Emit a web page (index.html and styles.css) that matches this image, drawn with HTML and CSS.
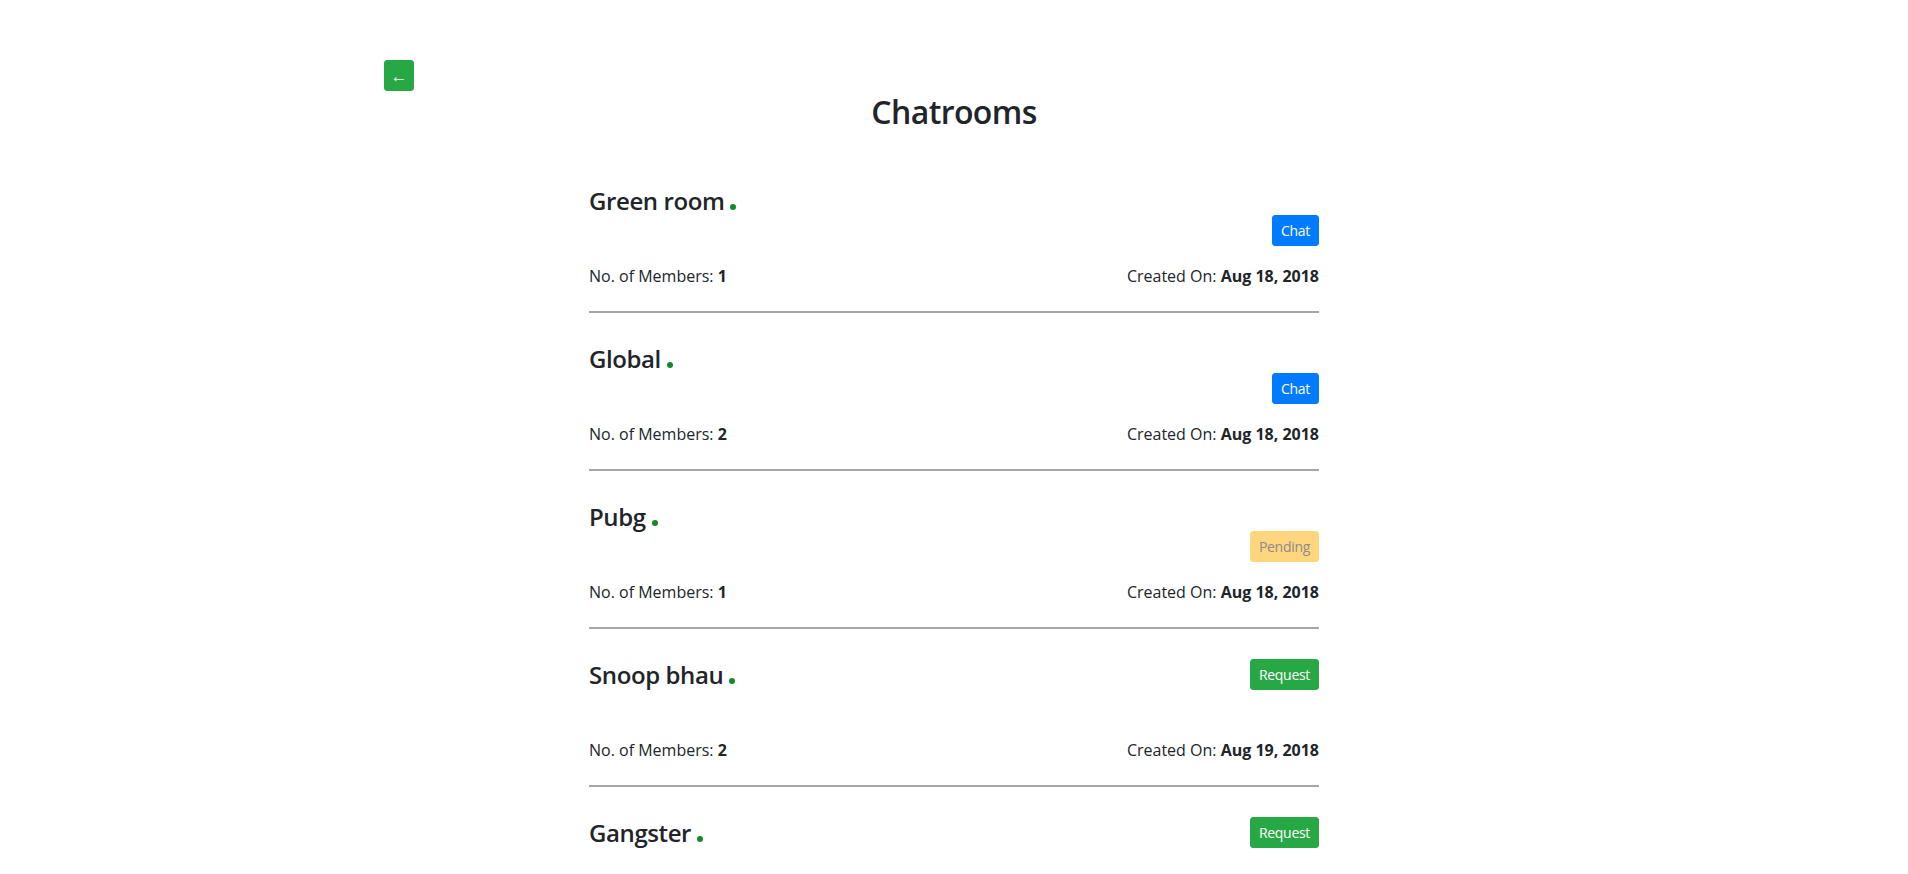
FILE: index.html
```html
<!DOCTYPE html>
<html lang="en">
<head>
<meta charset="utf-8">
<title>Chatrooms</title>
<link rel="stylesheet" href="styles.css">
</head>
<body>
<div class="container">
  <button class="btn btn-back" type="button">&larr;</button>
  <h2 class="title">Chatrooms</h2>
  <div class="rooms">
    <div class="room">
      <div class="room-head"><h4 class="room-name">Green room<span class="dot"></span></h4></div>
      <div class="room-actions"><button class="btn btn-chat" type="button">Chat</button></div>
      <div class="room-meta"><span>No. of Members: <b>1</b></span><span>Created On: <b>Aug 18, 2018</b></span></div>
    </div>
    <div class="room">
      <div class="room-head"><h4 class="room-name">Global<span class="dot"></span></h4></div>
      <div class="room-actions"><button class="btn btn-chat" type="button">Chat</button></div>
      <div class="room-meta"><span>No. of Members: <b>2</b></span><span>Created On: <b>Aug 18, 2018</b></span></div>
    </div>
    <div class="room">
      <div class="room-head"><h4 class="room-name">Pubg<span class="dot"></span></h4></div>
      <div class="room-actions"><button class="btn btn-pending" type="button" disabled>Pending</button></div>
      <div class="room-meta"><span>No. of Members: <b>1</b></span><span>Created On: <b>Aug 18, 2018</b></span></div>
    </div>
    <div class="room">
      <div class="room-head"><h4 class="room-name">Snoop bhau<span class="dot"></span></h4><button class="btn btn-request" type="button">Request</button></div>
      <div class="room-actions"></div>
      <div class="room-meta"><span>No. of Members: <b>2</b></span><span>Created On: <b>Aug 19, 2018</b></span></div>
    </div>
    <div class="room room-last">
      <div class="room-head"><h4 class="room-name">Gangster<span class="dot"></span></h4><button class="btn btn-request" type="button">Request</button></div>
    </div>
  </div>
</div>
</body>
</html>
```
FILE: styles.css
```css
html, body {
  margin: 0;
  height: 100%;
  overflow: hidden;
  background: #fff;
}
body {
  font-family: "Open Sans", "Noto Sans", "Liberation Sans", sans-serif;
  color: #212529;
  font-size: 16px;
  line-height: 1.5;
}
.container {
  width: 1140px;
  margin: 0 auto;
  padding-top: 60px;
}
.btn {
  display: inline-block;
  border: 1px solid transparent;
  border-radius: 3px;
  font-family: inherit;
  font-size: 14px;
  line-height: 21px;
  padding: 4px 8px;
  color: #fff;
  letter-spacing: -0.3px;
  cursor: pointer;
}
.btn-back {
  display: block;
  width: 30px;
  height: 31px;
  padding: 0;
  background: #28a745;
  border-color: #28a745;
  font-size: 17px;
  line-height: 27px;
  letter-spacing: 0;
  text-align: center;
}
.title {
  margin: 0;
  padding-top: 2px;
  text-align: center;
  font-size: 32px;
  font-weight: 600;
  line-height: 38.4px;
  letter-spacing: -0.6px;
}
.rooms {
  width: 730px;
  margin: 24px 0 0 205px;
}
.room {
  padding: 31px 0 23px;
  border-bottom: 2px solid #a6a6a6;
}
.room-last {
  border-bottom: 0;
}
.room-head {
  display: flex;
  justify-content: space-between;
  align-items: flex-start;
  height: 29px;
}
.room-head .btn {
  margin-top: -1px;
}
.room-name {
  margin: 0;
  font-size: 24px;
  font-weight: 600;
  line-height: 30px;
  letter-spacing: -0.4px;
}
.dot {
  display: inline-block;
  width: 6px;
  height: 6px;
  margin-left: 6px;
  border-radius: 50%;
  background: #148a26;
  vertical-align: baseline;
}
.room-actions {
  display: flex;
  justify-content: flex-end;
  height: 31px;
}
.room-meta {
  display: flex;
  justify-content: space-between;
  margin-top: 18px;
  line-height: 24px;
  font-size: 16px;
}
.room-meta b {
  font-weight: 700;
}
.btn-chat {
  background: #007bff;
  border-color: #007bff;
}
.btn-pending {
  background: #ffd57e;
  border-color: #ffd57e;
  color: #8c8c8c;
  cursor: default;
}
.btn-request {
  background: #28a745;
  border-color: #28a745;
}
```
